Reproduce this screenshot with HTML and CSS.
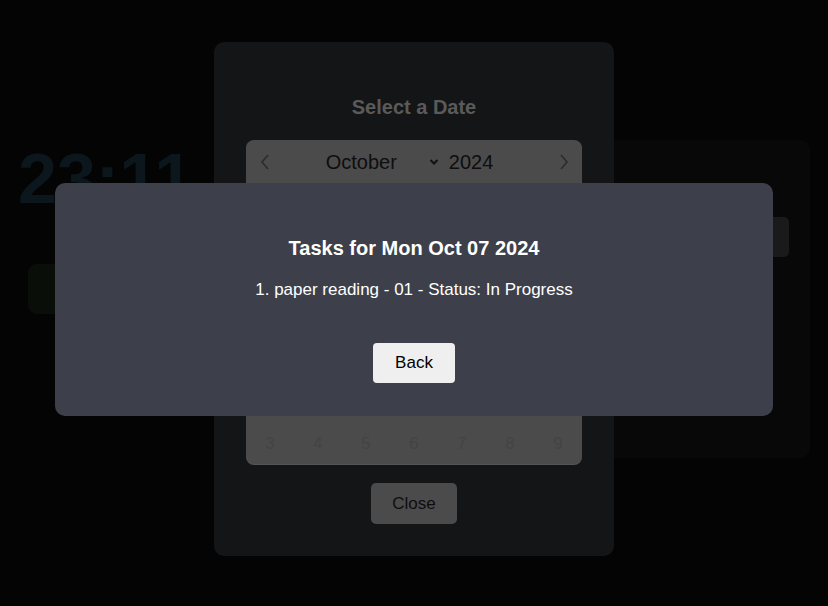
FILE: index.html
```html
<!DOCTYPE html>
<html lang="en">
<head>
<meta charset="utf-8">
<title>Tasks</title>
<link rel="stylesheet" href="styles.css">
</head>
<body>
<div class="page">
  <div class="left-col">
    <div class="clock">23:11</div>
    <div class="add-btn"></div>
  </div>
  <div class="right-panel">
    <div class="panel-box"></div>
  </div>
</div>

<div class="overlay">
  <div class="picker">
    <h2 class="picker-title">Select a Date</h2>
    <div class="calendar">
      <div class="cal-head">
        <svg class="nav" width="12" height="18" viewBox="0 0 12 18"><polyline points="9,2 3,9 9,16" fill="none" stroke="#2c2c2c" stroke-width="1.6"/></svg>
        <div class="month-year">
          <span class="month">October</span>
          <svg class="caret" width="10" height="8" viewBox="0 0 10 8"><polyline points="1.5,2 5,5.5 8.5,2" fill="none" stroke="#111" stroke-width="2"/></svg>
          <span class="year">2024</span>
        </div>
        <svg class="nav" width="12" height="18" viewBox="0 0 12 18"><polyline points="3,2 9,9 3,16" fill="none" stroke="#2c2c2c" stroke-width="1.6"/></svg>
      </div>
      <div class="days">
        <span class="wd">Sun</span><span class="wd">Mon</span><span class="wd">Tue</span><span class="wd">Wed</span><span class="wd">Thu</span><span class="wd">Fri</span><span class="wd">Sat</span>
        <span class="dim">29</span><span class="dim">30</span><span>1</span><span>2</span><span>3</span><span>4</span><span>5</span>
        <span>6</span><span>7</span><span>8</span><span>9</span><span>10</span><span>11</span><span>12</span>
        <span>13</span><span>14</span><span>15</span><span>16</span><span>17</span><span>18</span><span>19</span>
        <span>20</span><span>21</span><span>22</span><span>23</span><span>24</span><span>25</span><span>26</span>
        <span>27</span><span>28</span><span>29</span><span>30</span><span>31</span><span class="dim">1</span><span class="dim">2</span>
        <span class="dim">3</span><span class="dim">4</span><span class="dim">5</span><span class="dim">6</span><span class="dim">7</span><span class="dim">8</span><span class="dim">9</span>
      </div>
    </div>
    <button class="close-btn">Close</button>
  </div>
</div>

<div class="overlay top">
  <div class="task-modal">
    <h2 class="task-title">Tasks for Mon Oct 07 2024</h2>
    <p class="task-item">1. paper reading - 01 - Status: In Progress</p>
    <button class="back-btn">Back</button>
  </div>
</div>
</body>
</html>
```

FILE: styles.css
```css
* { box-sizing: border-box; }
html, body {
  margin: 0;
  height: 100%;
}
body {
  background: #040404;
  font-family: "Liberation Sans", Arial, sans-serif;
  overflow: hidden;
}

/* background page */
.page {
  display: flex;
  justify-content: space-between;
  padding: 140px 18px 0 18px;
}
.left-col {
  display: flex;
  flex-direction: column;
}
.clock {
  font-size: 70px;
  font-weight: bold;
  line-height: 78px;
  color: #0b171c;
}
.add-btn {
  margin: 46px 0 0 10px;
  width: 120px;
  height: 50px;
  border-radius: 9px;
  background: #090e08;
}
.right-panel {
  width: 390px;
  height: 318px;
  background: #080808;
  border-radius: 10px;
  padding: 77px 21px 0 21px;
}
.panel-box {
  height: 40px;
  border-radius: 5px;
  background: #1a1a1a;
}

/* overlays */
.overlay {
  position: fixed;
  inset: 0;
  display: flex;
  justify-content: center;
}
.picker {
  margin-top: 42px;
  width: 400px;
  height: 514px;
  background: #141517;
  border-radius: 10px;
  padding: 53px 32px 0 32px;
  display: flex;
  flex-direction: column;
  align-items: center;
  align-self: flex-start;
}
.picker-title {
  margin: 0;
  font-size: 20px;
  line-height: 24px;
  color: #5a5a5a;
  font-weight: bold;
}
.calendar {
  margin-top: 21px;
  width: 336px;
  height: 324px;
  background: #4b4b4b;
  border-radius: 8px;
  box-shadow: 0 1px 0 #555;
  display: flex;
  flex-direction: column;
}
.cal-head {
  height: 44px;
  display: flex;
  align-items: center;
  justify-content: space-between;
  padding: 0 12px 0 13px;
}
.month-year {
  display: flex;
  align-items: center;
  font-size: 20px;
  color: #0e0e0e;
  margin-right: 10px;
}
.caret {
  margin: 0 10px 0 32px;
}
.days {
  flex: 1;
  display: grid;
  grid-template-columns: repeat(7, 1fr);
  grid-template-rows: repeat(7, 40px);
  align-items: center;
  justify-items: center;
  font-size: 17px;
  color: #222;
}
.wd { font-weight: bold; font-size: 14px; }
.days .dim { color: #444; }
.close-btn {
  margin-top: 19px;
  width: 86px;
  height: 41px;
  border: none;
  border-radius: 5px;
  background: #4b4b4b;
  color: #0e0e0e;
  font-family: "Liberation Sans", Arial, sans-serif;
  font-size: 17px;
}

.task-modal {
  margin-top: 183px;
  width: 718px;
  height: 233px;
  background: #3d404a;
  border-radius: 10px;
  padding: 53px 0 0 0;
  display: flex;
  flex-direction: column;
  align-items: center;
  align-self: flex-start;
}
.task-title {
  margin: 0;
  font-size: 20px;
  line-height: 24px;
  font-weight: bold;
  color: #fff;
}
.task-item {
  margin: 20px 0 0 0;
  font-size: 17px;
  line-height: 20px;
  color: #fff;
}
.back-btn {
  margin-top: 43px;
  width: 82px;
  height: 40px;
  border: none;
  border-radius: 4px;
  background: #efefef;
  color: #000;
  font-family: "Liberation Sans", Arial, sans-serif;
  font-size: 17px;
}
```
